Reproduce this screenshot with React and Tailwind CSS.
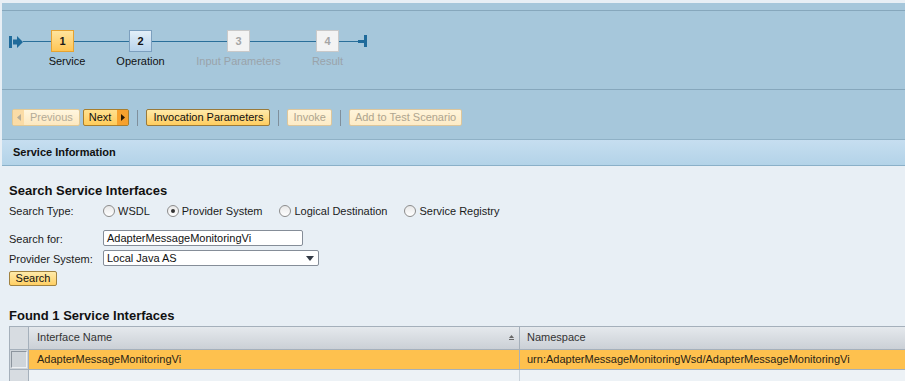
const STEPS = [
  { n: '1', label: 'Service', state: 'active' },
  { n: '2', label: 'Operation', state: 'next' },
  { n: '3', label: 'Input Parameters', state: 'off' },
  { n: '4', label: 'Result', state: 'off' },
]

const RADIOS = [
  { label: 'WSDL', checked: false },
  { label: 'Provider System', checked: true },
  { label: 'Logical Destination', checked: false },
  { label: 'Service Registry', checked: false },
]

function StepBox({ step }) {
  const box =
    step.state === 'active'
      ? 'bg-gradient-to-b from-[#ffe49c] to-[#ffc552] border-[#e5a232] text-[#1a1a1a]'
      : step.state === 'next'
        ? 'bg-gradient-to-b from-[#e3eff9] to-[#b8d4ec] border-[#7c9fbe] text-[#111]'
        : 'bg-[#f3f3f3] border-[#c9c9c9] text-[#a5a5a5]'
  const text = step.state === 'off' ? 'text-[#9aa3aa]' : 'text-[#111]'
  return (
    <div className="flex flex-col items-center w-[23px]">
      <div className={`w-[23px] h-[22px] border flex items-center justify-center font-bold text-[11px] ${box}`}>
        {step.n}
      </div>
      <div className={`whitespace-nowrap mt-[3px] text-[11px] leading-[13px] ${text} ${step.state === 'active' ? 'pl-[9px]' : ''}`}>
        {step.label}
      </div>
    </div>
  )
}

function Line({ w }) {
  return <div className={`h-px bg-[#2a6f9a] self-start mt-[11px] ${w}`} />
}

function Separator() {
  return <div className="w-px h-[16px] bg-[#7f8f9c] mx-[8px]" />
}

function Radio({ checked, label }) {
  return (
    <div className="flex items-center gap-[3px]">
      <div className="w-[12px] h-[12px] rounded-full border border-[#8c8c8c] bg-gradient-to-b from-[#e8e8e8] to-[#ffffff] flex items-center justify-center">
        {checked && <div className="w-[4px] h-[4px] rounded-full bg-[#333]" />}
      </div>
      <span>{label}</span>
    </div>
  )
}

export default function App() {
  return (
    <div
      className="w-[905px] h-[381px] overflow-hidden bg-[#e8eff5] text-[11px] text-[#1b1b1b]"
      style={{ fontFamily: '"Liberation Sans", Arial, sans-serif' }}
    >
      {/* Roadmap + toolbar */}
      <div className="mt-[3px] ml-[2px] bg-[#a6c7db]">
        <div className="h-[8px] border-b border-[#86a7bc]" />
        <div className="h-[79px] border-b border-[#86a7bc] pt-[19px] pl-[7px]">
          <div className="flex items-start">
            {/* start icon */}
            <div className="flex items-center mt-[6px] h-[12px]">
              <div className="w-[3px] h-[12px] bg-[#1f6b9b]" />
              <svg width="10" height="12" viewBox="0 0 10 12" className="ml-px">
                <path d="M0 3.5 H4 V0 L10 6 L4 12 V8.5 H0 Z" fill="#1f6b9b" />
              </svg>
            </div>
            <Line w="w-[28px]" />
            <StepBox step={STEPS[0]} />
            <Line w="w-[55px]" />
            <StepBox step={STEPS[1]} />
            <Line w="w-[75px]" />
            <StepBox step={STEPS[2]} />
            <Line w="w-[66px]" />
            <StepBox step={STEPS[3]} />
            <Line w="w-[19px]" />
            <div className="flex items-center mt-[5px] h-[12px]">
              <div className="w-[6px] h-[3px] bg-[#1f6b9b]" />
              <div className="w-[3px] h-[12px] bg-[#1f6b9b]" />
            </div>
          </div>
        </div>

        {/* toolbar */}
        <div className="h-[50px] pt-[19px] pl-[10px] flex items-start border-b border-[#8fb1c6]">
          <div className="flex items-center h-[17px]">
            <button className="h-[17px] flex items-center border border-[#e2c995] rounded-[2px] bg-gradient-to-b from-[#fff6df] to-[#fde8bf] text-[#b3ab98]">
              <span className="h-full w-[11px] flex items-center justify-center bg-[#fbdca6]">
                <svg width="4" height="7" viewBox="0 0 4 7"><path d="M4 0 L0 3.5 L4 7 Z" fill="#b8ad97" /></svg>
              </span>
              <span className="pl-[6px] pr-[6px] leading-[15px]">Previous</span>
            </button>
            <button className="ml-[3px] h-[17px] flex items-center border border-[#a97e2c] rounded-[2px] bg-gradient-to-b from-[#ffe08f] to-[#ffcc59] text-[#111]">
              <span className="pl-[5px] pr-[6px] leading-[15px]">Next</span>
              <span className="h-full w-[11px] flex items-center justify-center bg-[#f6a12e]">
                <svg width="4" height="7" viewBox="0 0 4 7"><path d="M0 0 L4 3.5 L0 7 Z" fill="#2a1a05" /></svg>
              </span>
            </button>
            <Separator />
            <button className="h-[17px] px-[6px] border border-[#9a7a3a] rounded-[2px] bg-gradient-to-b from-[#ffeaa9] to-[#ffcd5d] text-[#111] leading-[15px]">
              Invocation Parameters
            </button>
            <Separator />
            <button className="h-[17px] px-[5px] border border-[#dcc69c] rounded-[2px] bg-gradient-to-b from-[#fff4da] to-[#fdebc6] text-[#aea58f] leading-[15px]">
              Invoke
            </button>
            <Separator />
            <button className="h-[17px] px-[5px] border border-[#dcc69c] rounded-[2px] bg-gradient-to-b from-[#fff4da] to-[#fdebc6] text-[#aea58f] leading-[15px]">
              Add to Test Scenario
            </button>
          </div>
        </div>

        {/* section header */}
        <div className="h-[26px] border-b border-[#8ab0c8] bg-gradient-to-b from-[#c6def0] to-[#b3d3e8] flex items-center pl-[11px] font-bold text-[11px] text-[#111]">
          Service Information
        </div>
      </div>

      {/* Search form */}
      <div className="pl-[9px]">
        <div className="mt-[17px] font-bold text-[13px] leading-[15px] text-[#111]">Search Service Interfaces</div>
        <div className="flex items-center h-[16px] mt-[5px]">
          <div className="w-[94px]">Search Type:</div>
          <div className="flex items-center gap-[17px]">
            {RADIOS.map((r) => (
              <Radio key={r.label} checked={r.checked} label={r.label} />
            ))}
          </div>
        </div>
        <div className="flex items-end h-[16px] mt-[11px]">
          <div className="w-[94px] leading-[13px]">Search for:</div>
          <div className="w-[200px] h-[16px] border border-[#858d98] rounded-[2px] bg-white flex items-center pl-[3px] text-[#111]">
            AdapterMessageMonitoringVi
          </div>
        </div>
        <div className="flex items-end h-[16px] mt-[4px]">
          <div className="w-[94px] leading-[13px]">Provider System:</div>
          <div className="w-[216px] h-[16px] border border-[#858d98] rounded-[2px] bg-white flex items-center justify-between pl-[3px] pr-[4px] text-[#111]">
            <span>Local Java AS</span>
            <svg width="8" height="5" viewBox="0 0 8 5"><path d="M0 0 H8 L4 5 Z" fill="#333a45" /></svg>
          </div>
        </div>
        <button className="mt-[5px] h-[15px] w-[48px] border border-[#a18240] rounded-[2px] bg-gradient-to-b from-[#ffeaa8] to-[#ffcf62] text-[#111] leading-[13px] text-[11px]">
          Search
        </button>

        <div className="mt-[21px] font-bold text-[13px] leading-[15px] text-[#111]">Found 1 Service Interfaces</div>

        {/* table */}
        <div className="mt-[3px] border-t border-l border-[#a5b0bb] text-[11px]">
          <div className="flex h-[23px] border-b border-[#a5b0bb]">
            <div className="w-[19px] bg-[#d7dce1] border-r border-[#a5b0bb]" />
            <div className="w-[491px] flex items-center justify-between pl-[8px] pr-[5px] bg-gradient-to-b from-[#e5e9ed] to-[#cbd0d6] border-r border-[#a5b0bb] text-[#333]">
              <span>Interface Name</span>
              <svg width="5" height="5" viewBox="0 0 5 5">
                <path d="M2.5 0 L5 3 H0 Z" fill="#666" />
                <rect x="0" y="4" width="5" height="1" fill="#666" />
              </svg>
            </div>
            <div className="flex-1 flex items-center pl-[7px] bg-gradient-to-b from-[#e5e9ed] to-[#cbd0d6] text-[#333]">
              Namespace
            </div>
          </div>
          <div className="flex h-[20px] border-b border-[#a5b0bb]">
            <div className="w-[19px] bg-[#cfd5da] border-r border-[#a5b0bb] p-px">
              <div className="h-full border border-t-[#8c959e] border-l-[#8c959e] border-r-[#eef1f4] border-b-[#eef1f4]" />
            </div>
            <div className="w-[491px] flex items-center pl-[8px] bg-[#fec14e] border-r border-[#a5b0bb] text-[#2a2416]">
              AdapterMessageMonitoringVi
            </div>
            <div className="flex-1 flex items-center pl-[7px] bg-[#fec14e] text-[#2a2416]">
              urn:AdapterMessageMonitoringWsd/AdapterMessageMonitoringVi
            </div>
          </div>
          <div className="flex h-[20px]">
            <div className="w-[19px] bg-[#d7dce1] border-r border-[#a5b0bb]" />
            <div className="w-[491px] bg-[#edf2f6] border-r border-[#c9d2da]" />
            <div className="flex-1 bg-[#edf2f6]" />
          </div>
        </div>
      </div>
    </div>
  )
}
